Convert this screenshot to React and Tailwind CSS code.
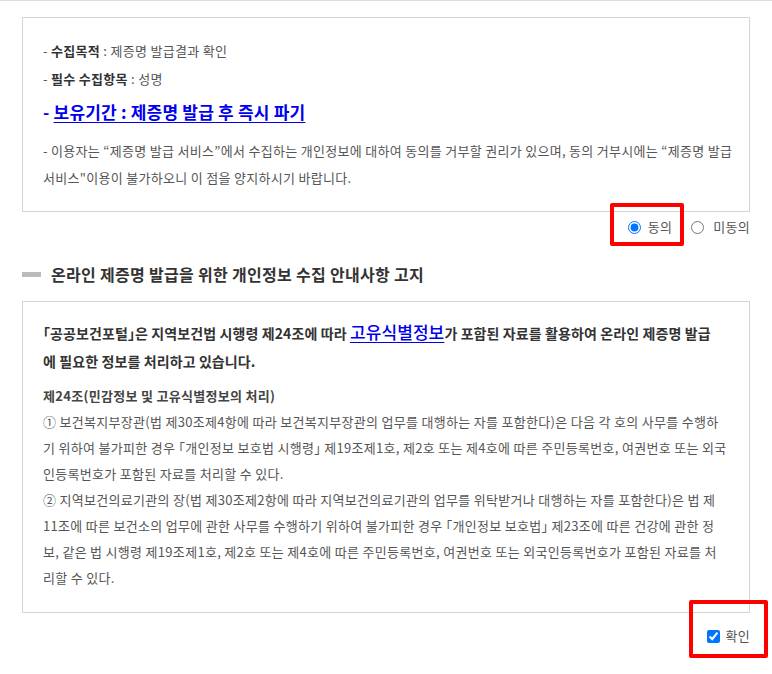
import React from "react";

const font = { fontFamily: '"Noto Sans CJK KR", "Noto Sans", sans-serif' };

export default function App() {
  return (
    <div
      className="relative w-[772px] h-[674px] bg-white border-t border-[#dddddd] overflow-hidden [font-feature-settings:'halt']"
      style={font}
    >
      {/* box 1 */}
      <div className="mx-[22px] mt-[16px] border border-[#d5d5d5] px-[20px] pt-[19px] pb-[20px] text-[13px] text-[#555] tracking-[0.3px]">
        <div className="h-[28px] leading-[28px]">
          - <b className="text-[#333] font-bold">수집목적</b> : 제증명 발급결과 확인
        </div>
        <div className="h-[28px] leading-[28px]">
          - <b className="text-[#333] font-bold">필수 수집항목</b> : 성명
        </div>
        <div className="h-[38px] leading-[38px] text-[17px] font-bold text-[#0000ee] tracking-[0.2px]">
          - <span className="underline underline-offset-[3px]">보유기간 : 제증명 발급 후 즉시 파기</span>
        </div>
        <div className="mt-[6px] leading-[27px] whitespace-nowrap">
          - 이용자는 “제증명 발급 서비스”에서 수집하는 개인정보에 대하여 동의를 거부할 권리가 있으며, 동의 거부시에는 “제증명 발급
          <br />
          서비스"이용이 불가하오니 이 점을 양지하시기 바랍니다.
        </div>
      </div>

      {/* radio row */}
      <div className="mx-[22px] mt-[6px] h-[18px] flex items-center justify-end text-[13px] text-[#555] tracking-[0.3px]">
        <label className="flex items-center">
          <input type="radio" name="agree" defaultChecked className="w-[13px] h-[13px] m-0" />
          <span className="ml-[7px]">동의</span>
        </label>
        <label className="flex items-center ml-[19px]">
          <input type="radio" name="agree" className="w-[13px] h-[13px] m-0" />
          <span className="ml-[9px]">미동의</span>
        </label>
      </div>

      {/* heading */}
      <div className="mx-[22px] mt-[24px] h-[28px] flex items-center">
        <div className="w-[19px] h-[5px] bg-[#bbbbbb]" />
        <h2 className="ml-[10px] text-[16px] font-semibold text-[#333] tracking-[0.3px]">
          온라인 제증명 발급을 위한 개인정보 수집 안내사항 고지
        </h2>
      </div>

      {/* box 2 */}
      <div className="mx-[22px] mt-[13px] border border-[#d5d5d5] px-[20px] pt-[16px] pb-[21px] tracking-[0.3px]">
        <div className="text-[14px] font-semibold text-[#333] leading-[28px] whitespace-nowrap tracking-[0.1px]">
          「공공보건포털」은 지역보건법 시행령 제24조에 따라{" "}
          <span className="text-[17px] text-[#0000ee] underline underline-offset-[3px] font-medium">고유식별정보</span>가 포함된 자료를 활용하여 온라인 제증명 발급
          <br />
          에 필요한 정보를 처리하고 있습니다.
        </div>
        <div className="mt-[8px] text-[13px] font-bold text-[#444] leading-[26px]">
          제24조(민감정보 및 고유식별정보의 처리)
        </div>
        <div className="text-[13px] text-[#555] leading-[26px] whitespace-nowrap">
          ① 보건복지부장관(법 제30조제4항에 따라 보건복지부장관의 업무를 대행하는 자를 포함한다)은 다음 각 호의 사무를 수행하
          <br />
          기 위하여 불가피한 경우 「개인정보 보호법 시행령」 제19조제1호, 제2호 또는 제4호에 따른 주민등록번호, 여권번호 또는 외국
          <br />
          인등록번호가 포함된 자료를 처리할 수 있다.
          <br />
          ② 지역보건의료기관의 장(법 제30조제2항에 따라 지역보건의료기관의 업무를 위탁받거나 대행하는 자를 포함한다)은 법 제
          <br />
          11조에 따른 보건소의 업무에 관한 사무를 수행하기 위하여 불가피한 경우 「개인정보 보호법」 제23조에 따른 건강에 관한 정
          <br />
          보, 같은 법 시행령 제19조제1호, 제2호 또는 제4호에 따른 주민등록번호, 여권번호 또는 외국인등록번호가 포함된 자료를 처
          <br />
          리할 수 있다.
        </div>
      </div>

      {/* checkbox row */}
      <div className="mx-[22px] mt-[14px] h-[18px] flex items-center justify-end text-[13px] text-[#555]">
        <label className="flex items-center">
          <input type="checkbox" defaultChecked className="w-[13px] h-[13px] m-0" />
          <span className="ml-[5px] tracking-[0.3px]">확인</span>
        </label>
      </div>

      {/* red annotation boxes */}
      <div className="absolute left-[610px] top-[202px] w-[74px] h-[43px] border-[4px] border-[#ff0000] rounded-[2px] pointer-events-none" />
      <div className="absolute left-[689px] top-[599px] w-[79px] h-[58px] border-[4px] border-[#ff0000] rounded-[2px] pointer-events-none" />
    </div>
  );
}
